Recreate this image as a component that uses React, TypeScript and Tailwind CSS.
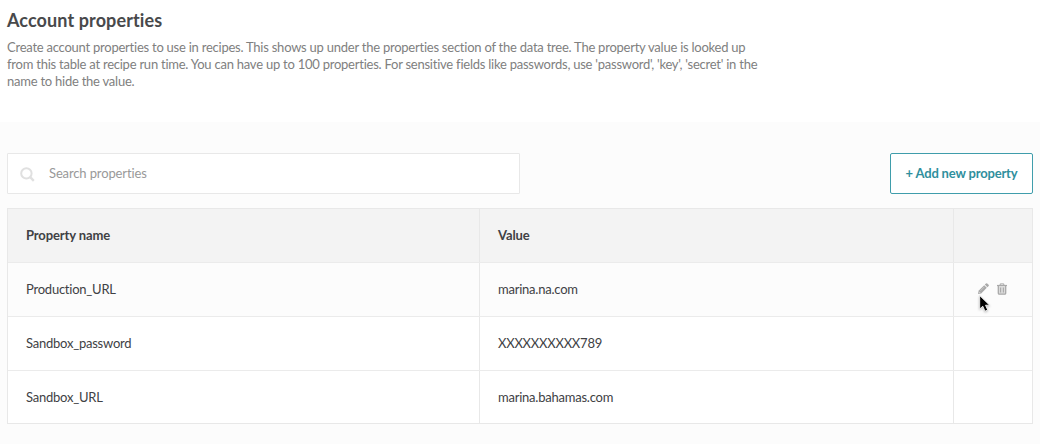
import React from "react";

const rows = [
  { name: "Production_URL", value: "marina.na.com", active: true },
  { name: "Sandbox_password", value: "XXXXXXXXXX789", active: false },
  { name: "Sandbox_URL", value: "marina.bahamas.com", active: false },
];

function SearchIcon() {
  return (
    <svg className="mt-[2px]" width="15" height="15" viewBox="0 0 15 15" fill="none" stroke="#e0e0e0" strokeWidth="2">
      <circle cx="6.4" cy="6.4" r="5.2" />
      <path d="M10.2 10.2L13.8 13.8" strokeWidth="2.4" />
    </svg>
  );
}

function PencilIcon() {
  return (
    <svg width="11" height="11" viewBox="0 0 11 11" fill="#a9a9a9">
      <path d="M0 11L.6 7.8L6.2 2.2L8.8 4.8L3.2 10.4Z" />
      <path d="M6.8 1.6L8 .4Q8.6-.1 9.2.4L10.6 1.8Q11.1 2.4 10.6 3L9.4 4.2Z" />
      <path d="M2.5 7.7L6.3 3.9" stroke="#d0d0d0" strokeWidth=".7" />
      <path d="M1.1 8.9L2.1 9.9" stroke="#eee" strokeWidth=".8" />
    </svg>
  );
}

function TrashIcon() {
  return (
    <svg width="10" height="12" viewBox="0 0 10 12" fill="none" stroke="#a9a9a9">
      <path d="M3.2 2V.9H6.8V2" strokeWidth="1" />
      <path d="M0 2.5H10" strokeWidth="1.2" />
      <path d="M1.3 3V10.2Q1.3 11.2 2.3 11.2H7.7Q8.7 11.2 8.7 10.2V3" fill="#dcdcdc" strokeWidth="1.3" />
      <path d="M3.6 4.5V9.5M6.4 4.5V9.5" strokeWidth="1.1" />
    </svg>
  );
}

function Cursor() {
  return (
    <svg className="pointer-events-none absolute left-[25px] top-[32px] drop-shadow-[0_1px_1px_rgba(0,0,0,0.25)]" width="12" height="18" viewBox="0 0 12 18">
      <path d="M.7.6V14L3.8 11.2L6 16.2L8.7 15L6.5 10.2H10.6Z" fill="#000" stroke="#fff" strokeWidth=".8" />
    </svg>
  );
}

export default function App() {
  return (
    <div className="h-[444px] w-[1040px] overflow-hidden bg-[#fcfcfc] font-['Lato',sans-serif] text-[13px] tracking-[-0.23px] text-[#404144]">
      <header className="h-[122px] bg-white pl-[7px] pt-[8px]">
        <h1 className="text-[18px] font-bold leading-[24px] tracking-[0.11px] text-[#48494b]">Account properties</h1>
        <p className="mt-[7px] whitespace-nowrap leading-[17px] tracking-[-0.238px] text-[#808080]">
          Create account properties to use in recipes. This shows up under the properties section of the data tree. The property value is looked up<br />
          from this table at recipe run time. You can have up to 100 properties. For sensitive fields like passwords, use 'password', 'key', 'secret' in the<br />
          name to hide the value.
        </p>
      </header>
      <main className="px-[7px] pt-[31px]">
        <div className="flex justify-between">
          <label className="flex h-[41px] w-[513px] items-center gap-[14px] rounded-[1px] border border-[#e8e8e8] bg-white pl-[12px]">
            <SearchIcon />
            <input
              className="w-[400px] bg-transparent tracking-[-0.13px] outline-none placeholder:text-[#999]"
              placeholder="Search properties"
            />
          </label>
          <button className="h-[41px] w-[143px] rounded-[2px] border border-[#3f9dab] bg-white font-bold tracking-[-0.17px] text-[#2f8f9d]">
            + Add new property
          </button>
        </div>
        <div className="mt-[14px] border border-[#e8e8e8]">
          <div className="grid h-[53px] grid-cols-[472px_474px_1fr] bg-[#f3f3f3] font-bold tracking-[-0.12px]">
            <div className="flex items-center border-r border-[#e8e8e8] pl-[18px]">Property name</div>
            <div className="flex items-center border-r border-[#e8e8e8] pl-[18px]">Value</div>
            <div />
          </div>
          {rows.map((r) => (
            <div
              key={r.name}
              className={`group grid h-[54px] grid-cols-[472px_474px_1fr] border-t border-[#ebebeb] last:h-[53px] ${r.active ? "bg-[#fcfcfc]" : "bg-white"}`}
            >
              <div className="flex items-center border-r border-[#e8e8e8] pl-[18px] group-last:pt-px">{r.name}</div>
              <div className="flex items-center border-r border-[#e8e8e8] pl-[18px] group-last:pt-px">{r.value}</div>
              <div className="relative flex items-center gap-[8px] pb-[2px] pl-[24px]">
                {r.active && (
                  <>
                    <PencilIcon />
                    <TrashIcon />
                    <Cursor />
                  </>
                )}
              </div>
            </div>
          ))}
        </div>
      </main>
    </div>
  );
}
